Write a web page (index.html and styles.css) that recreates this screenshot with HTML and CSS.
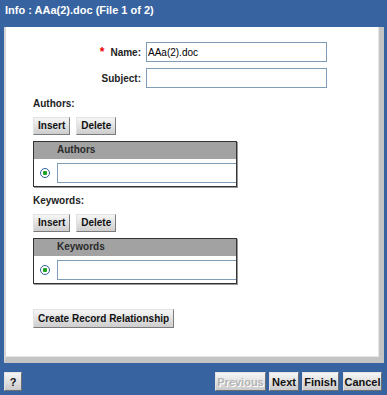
FILE: index.html
```html
<!DOCTYPE html>
<html>
<head>
<meta charset="utf-8">
<link rel="stylesheet" href="styles.css">
</head>
<body>
<div class="title">Info : AAa(2).doc (File 1 of 2)</div>
<div class="panel">
  <div class="fields">
    <div class="lbl"><span class="req">*</span>Name:</div>
    <input class="txt" type="text" value="AAa(2).doc">
    <div class="lbl">Subject:</div>
    <input class="txt" type="text" value="">
  </div>

  <div class="section-label">Authors:</div>
  <div class="btnrow">
    <button class="btn">Insert</button>
    <button class="btn">Delete</button>
  </div>
  <div class="grid">
    <div class="grid-head">Authors</div>
    <div class="grid-row">
      <span class="radio"></span>
      <input class="cell-input" type="text" value="">
    </div>
  </div>

  <div class="section-label kw">Keywords:</div>
  <div class="btnrow">
    <button class="btn">Insert</button>
    <button class="btn">Delete</button>
  </div>
  <div class="grid">
    <div class="grid-head">Keywords</div>
    <div class="grid-row">
      <span class="radio"></span>
      <input class="cell-input" type="text" value="">
    </div>
  </div>

  <button class="btn create">Create Record Relationship</button>
</div>
<div class="footer">
  <button class="fbtn help">?</button>
  <div class="nav">
    <button class="fbtn prev" disabled>Previous</button>
    <button class="fbtn next">Next</button>
    <button class="fbtn finish">Finish</button>
    <button class="fbtn cancel">Cancel</button>
  </div>
</div>
</body>
</html>
```
FILE: styles.css
```css
html, body {
  margin: 0;
  padding: 0;
}
body {
  width: 387px;
  height: 395px;
  overflow: hidden;
  background: #3763a0;
  font-family: "Liberation Sans", Arial, sans-serif;
  font-size: 10px;
  color: #000;
}
.title {
  box-sizing: border-box;
  height: 27px;
  padding: 3px 0 0 5px;
  font-size: 11px;
  line-height: 14px;
  font-weight: bold;
  color: #fff;
}
.panel {
  box-sizing: content-box;
  margin-left: 4px;
  width: 346px;
  height: 330px;
  padding: 15px 0 0 27px;
  height: 315px;
  background: #fff;
  border-left: 2px solid #d6d6d6;
  border-right: 5px solid #c4c4c4;
  border-bottom: 6px solid #c4c4c4;
  box-shadow: inset -1px -1px 0 #e6e6e6;
}
.fields {
  display: grid;
  grid-template-columns: 108px 181px;
  column-gap: 5px;
  row-gap: 6px;
}
.lbl {
  align-self: center;
  text-align: right;
  font-weight: bold;
  color: #222;
}
.req {
  color: #e00;
  font-size: 12px;
  margin-right: 6px;
}
.txt {
  box-sizing: border-box;
  height: 20px;
  margin: 0;
  padding: 0 1px;
  border: 1px solid #7f9db9;
  font-family: "Liberation Sans", Arial, sans-serif;
  font-size: 10px;
  color: #000;
  outline: none;
}
.section-label {
  margin-top: 10px;
  line-height: 12px;
  font-weight: bold;
  color: #222;
}
.section-label.kw {
  margin-top: 8px;
}
.btnrow {
  display: flex;
  gap: 6px;
  margin-top: 7px;
}
.btn {
  box-sizing: border-box;
  height: 18px;
  margin: 0;
  padding: 0 4px;
  border: 1px solid;
  border-color: #e2e2e2 #7c7c7c #7c7c7c #e2e2e2;
  background: linear-gradient(#f6f6f6, #cdcdcd);
  font-family: "Liberation Sans", Arial, sans-serif;
  font-size: 10px;
  font-weight: bold;
  color: #111;
  line-height: 14px;
}
.grid {
  box-sizing: border-box;
  width: 204px;
  margin-top: 6px;
  border: 1px solid #333;
  box-shadow: 1px 1px 0 #999;
}
.grid-head {
  height: 17px;
  line-height: 16px;
  padding-left: 23px;
  background: #a2a2a2;
  font-weight: bold;
  color: #2a2a2a;
}
.grid-row {
  display: flex;
  align-items: center;
  height: 27px;
  padding-left: 6px;
  gap: 7px;
  background: #fff;
}
.radio {
  box-sizing: border-box;
  width: 10px;
  height: 10px;
  border: 1px solid #33609a;
  border-radius: 50%;
  background: radial-gradient(circle, #1fa21f 0 2px, #ffffff 2.5px);
  flex: none;
}
.cell-input {
  box-sizing: border-box;
  flex: 1;
  min-width: 0;
  height: 20px;
  margin: 0;
  border: 1px solid #7f9db9;
  border-right: none;
  font-family: "Liberation Sans", Arial, sans-serif;
  font-size: 10px;
  outline: none;
}
.create {
  display: block;
  margin-top: 25px;
  height: 19px;
}
.footer {
  display: flex;
  justify-content: space-between;
  margin-top: 9px;
  padding: 0 5px 0 4px;
}
.nav {
  display: flex;
  gap: 3px;
}
.fbtn {
  box-sizing: border-box;
  height: 19px;
  margin: 0;
  padding: 0;
  border: 1px solid;
  border-color: #e2e2e2 #6e6e6e #6e6e6e #e2e2e2;
  background: linear-gradient(#f6f6f6, #cbcbcb);
  font-family: "Liberation Sans", Arial, sans-serif;
  font-size: 11px;
  font-weight: bold;
  color: #111;
  text-align: center;
}
.help { width: 18px; }
.prev {
  width: 51px;
  color: #b4b4b4;
  text-shadow: 1px 1px 0 #fff;
}
.next { width: 30px; }
.finish { width: 37px; }
.cancel { width: 39px; margin-left: 1px; }
```
